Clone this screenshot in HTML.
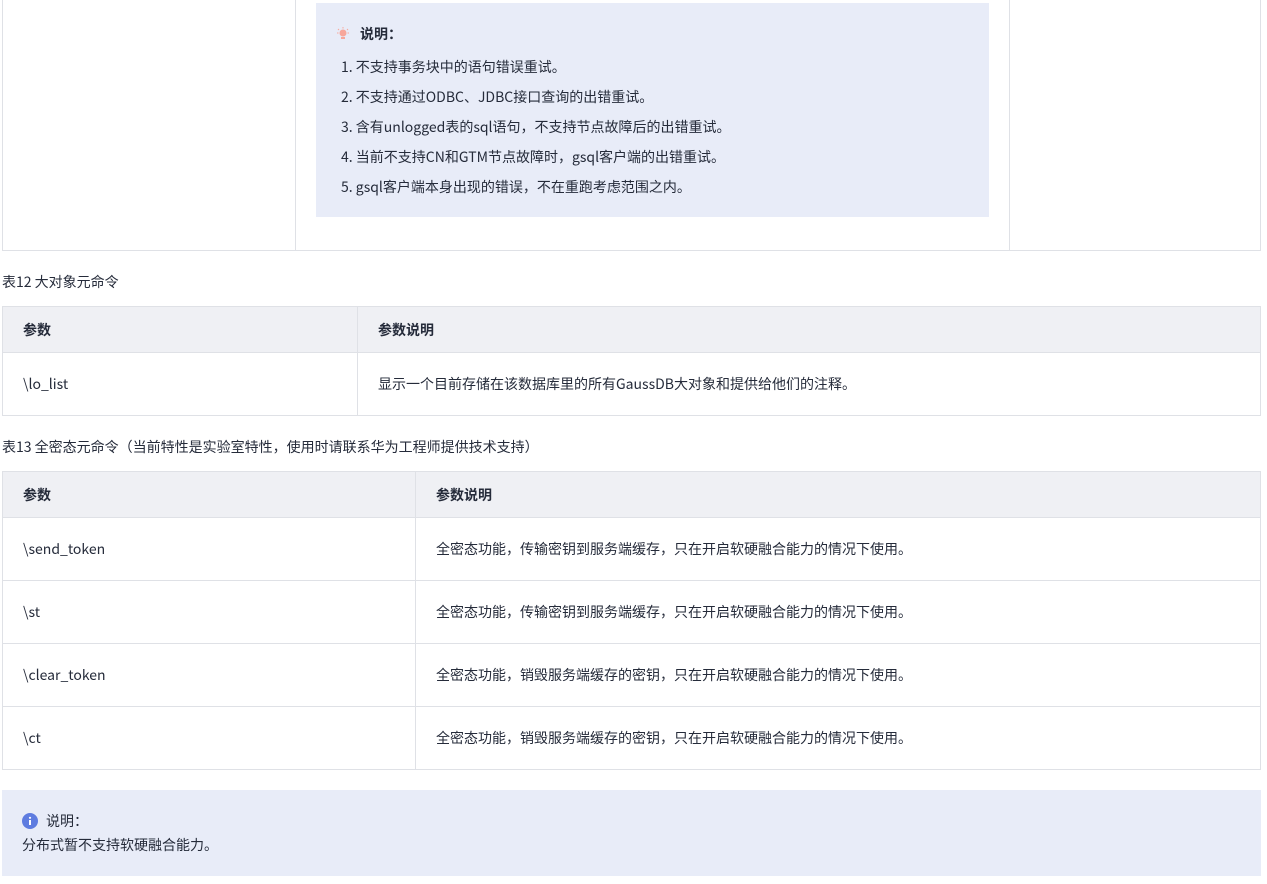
<!DOCTYPE html>
<html><head><meta charset="utf-8"><style>
body{margin:0;width:1267px;height:884px;background:#fff;font-family:"Noto Sans CJK SC",sans-serif;font-size:14px;color:#252b3a;position:relative;overflow:hidden}
.a{position:absolute;line-height:20px}
.b{border:1px solid #dfe1e6;box-sizing:border-box}
table{border-collapse:collapse;position:absolute;left:2px;width:1259px;table-layout:fixed}
td,th{border:1px solid #dfe1e6;padding:0 20px;text-align:left;font-size:14px;line-height:20px}
th{background:#eff0f4;font-weight:bold;height:45px}
td{height:62px}
</style></head><body>
<div class="a b" style="left:2px;top:-1px;width:1259px;height:252px;border-top:none"></div>
<div class="a" style="left:295px;top:0;width:1px;height:250px;background:#dfe1e6"></div>
<div class="a" style="left:1009px;top:0;width:1px;height:250px;background:#dfe1e6"></div>
<div class="a" style="left:316px;top:3px;width:673px;height:214px;background:#e8ecf8"></div>
<svg class="a" style="left:337px;top:27px" width="12" height="13" viewBox="0 0 12 13"><circle cx="6" cy="6" r="3.5" fill="#f7a79b"/><rect x="4" y="10" width="4" height="2" fill="#f7a79b"/><path d="M6 0v1.5M1 2l1 1M11 2l-1 1M0 6h1.5M12 6h-1.5" stroke="#f7a79b" stroke-width="1"/></svg>
<div class="a" style="left:360px;top:24px;font-weight:bold">说明：</div>
<div class="a" style="left:341px;top:52px;line-height:30px">1. 不支持事务块中的语句错误重试。<br>2. 不支持通过ODBC、JDBC接口查询的出错重试。<br>3. 含有unlogged表的sql语句，不支持节点故障后的出错重试。<br>4. 当前不支持CN和GTM节点故障时，gsql客户端的出错重试。<br>5. gsql客户端本身出现的错误，不在重跑考虑范围之内。</div>
<div class="a" style="left:2px;top:272px">表12 大对象元命令</div>
<table style="top:306px"><col style="width:355px"><col><tr><th>参数</th><th>参数说明</th></tr><tr><td>\lo_list</td><td>显示一个目前存储在该数据库里的所有GaussDB大对象和提供给他们的注释。</td></tr></table>
<div class="a" style="left:2px;top:437px">表13 全密态元命令（当前特性是实验室特性，使用时请联系华为工程师提供技术支持）</div>
<table style="top:471px"><col style="width:413px"><col><tr><th>参数</th><th>参数说明</th></tr>
<tr><td>\send_token</td><td>全密态功能，传输密钥到服务端缓存，只在开启软硬融合能力的情况下使用。</td></tr>
<tr><td>\st</td><td>全密态功能，传输密钥到服务端缓存，只在开启软硬融合能力的情况下使用。</td></tr>
<tr><td>\clear_token</td><td>全密态功能，销毁服务端缓存的密钥，只在开启软硬融合能力的情况下使用。</td></tr>
<tr><td>\ct</td><td>全密态功能，销毁服务端缓存的密钥，只在开启软硬融合能力的情况下使用。</td></tr></table>
<div class="a" style="left:2px;top:790px;width:1259px;height:86px;background:#e8ecf8"></div>
<svg class="a" style="left:22px;top:813px" width="16" height="16" viewBox="0 0 16 16"><circle cx="8" cy="8" r="8" fill="#5e7ce0"/><rect x="7" y="7" width="2" height="5" fill="#fff"/><circle cx="8" cy="4.8" r="1.1" fill="#fff"/></svg>
<div class="a" style="left:46px;top:811px">说明：</div>
<div class="a" style="left:22px;top:835px">分布式暂不支持软硬融合能力。</div>
</body></html>
